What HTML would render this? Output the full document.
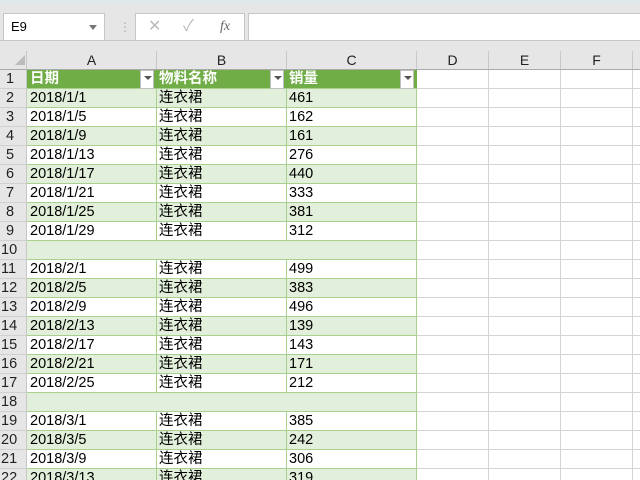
<!DOCTYPE html>
<html><head><meta charset="utf-8"><style>
*{margin:0;padding:0;box-sizing:border-box}
html,body{width:640px;height:480px;overflow:hidden}
body{background:#fff;font-family:"Liberation Sans","Noto Sans CJK SC",sans-serif;position:relative}
#top{position:absolute;left:0;top:0;width:640px;height:70px;background:#e6e6e6}
#top .strip{position:absolute;left:0;top:0;width:640px;height:3px;background:#dfe9ea}
.box{position:absolute;background:#fff;border:1px solid #c6c6c6}
.ch{position:absolute;top:51px;height:19px;font-size:14px;color:#222;text-align:center;line-height:19px;border-right:1px solid #c8c8c8}
.r{position:absolute;left:0;width:640px;height:19px;font-size:14.5px;line-height:19px;color:#000}
.r div{position:absolute;top:0;height:19px;white-space:nowrap}
.rh{left:0;width:27px;background:#e6e6e6;color:#222;padding-left:6px;border-right:1px solid #c8c8c8;border-bottom:1px solid #d0d0d0}
.g .band,.w .band{left:27px;width:390px}
.g .band{background:#e2efda;border-bottom:1px solid #a9d08e;border-right:1px solid #a9d08e}
.w .band{background:#fff;border-bottom:1px solid #a9d08e;border-right:1px solid #a9d08e}
.d .band{background-image:linear-gradient(to right,transparent 129px,#a9d08e 129px 130px,transparent 130px 259px,#a9d08e 259px 260px,transparent 260px)}
.a{left:30px}.b{left:159px}.c{left:289px}
.dd{position:absolute;top:2px;width:14px;height:14px;background:#fff;border:1px solid #c0c0c0}
.dd:after{content:"";position:absolute;left:3px;top:5px;border-left:4px solid transparent;border-right:4px solid transparent;border-top:4px solid #555}
</style></head><body>
<div id="top"><div class="strip"></div>
<div class="box" style="left:3px;top:13px;width:102px;height:28px;font-size:13px;line-height:26px;padding-left:7px">E9<span style="position:absolute;right:7px;top:11px;border-left:4px solid transparent;border-right:4px solid transparent;border-top:5px solid #777"></span></div>
<div style="position:absolute;left:119px;top:20px;color:#aaa;font-size:12px">⋮</div>
<div class="box" style="left:135px;top:13px;width:110px;height:28px;color:#bbb;font-size:16px;line-height:26px"><span style="position:absolute;left:12px">✕</span><span style="position:absolute;left:47px">✓</span><span style="position:absolute;left:84px;color:#666;font-family:'Liberation Serif',serif;font-style:italic;font-size:14px">fx</span></div>
<div class="box" style="left:248px;top:13px;width:400px;height:28px"></div>
<div style="position:absolute;left:0;top:40px;width:640px;height:1px;background:#c6c6c6"></div>
<div style="position:absolute;left:15px;top:55px;width:0;height:0;border-left:10px solid transparent;border-bottom:10px solid #bcbcbc"></div>
</div>
<div class="ch" style="left:0;width:27px"></div>
<div class="ch" style="left:27px;width:130px">A</div>
<div class="ch" style="left:157px;width:130px">B</div>
<div class="ch" style="left:287px;width:130px">C</div>
<div class="ch" style="left:417px;width:72px">D</div>
<div class="ch" style="left:489px;width:72px">E</div>
<div class="ch" style="left:561px;width:72px">F</div>
<div style="position:absolute;left:0;top:69px;width:640px;height:1px;background:#aaa"></div>

<div style="position:absolute;left:27px;top:70px;width:613px;height:410px;background:
repeating-linear-gradient(to bottom,transparent 0 18px,#d4d4d4 18px 19px),#fff"></div>
<div style="position:absolute;left:488px;top:70px;width:1px;height:410px;background:#d4d4d4"></div>
<div style="position:absolute;left:560px;top:70px;width:1px;height:410px;background:#d4d4d4"></div>
<div style="position:absolute;left:632px;top:70px;width:1px;height:410px;background:#d4d4d4"></div>

<div class="r" style="top:70px"><div class="rh">1</div><div style="left:27px;width:390px;background:#70ad47;border-bottom:1px solid #a9d08e"></div>
<div class="a" style="color:#fff;font-weight:bold">日期</div><div class="dd" style="left:140px"></div>
<div class="b" style="color:#fff;font-weight:bold">物料名称</div><div class="dd" style="left:270px"></div>
<div class="c" style="color:#fff;font-weight:bold">销量</div><div class="dd" style="left:400px"></div></div>

<div class="r g d" style="top:89px"><div class="rh">2</div><div class="band"></div><div class="a">2018/1/1</div><div class="b">连衣裙</div><div class="c">461</div></div>
<div class="r w d" style="top:108px"><div class="rh">3</div><div class="band"></div><div class="a">2018/1/5</div><div class="b">连衣裙</div><div class="c">162</div></div>
<div class="r g d" style="top:127px"><div class="rh">4</div><div class="band"></div><div class="a">2018/1/9</div><div class="b">连衣裙</div><div class="c">161</div></div>
<div class="r w d" style="top:146px"><div class="rh">5</div><div class="band"></div><div class="a">2018/1/13</div><div class="b">连衣裙</div><div class="c">276</div></div>
<div class="r g d" style="top:165px"><div class="rh">6</div><div class="band"></div><div class="a">2018/1/17</div><div class="b">连衣裙</div><div class="c">440</div></div>
<div class="r w d" style="top:184px"><div class="rh">7</div><div class="band"></div><div class="a">2018/1/21</div><div class="b">连衣裙</div><div class="c">333</div></div>
<div class="r g d" style="top:203px"><div class="rh">8</div><div class="band"></div><div class="a">2018/1/25</div><div class="b">连衣裙</div><div class="c">381</div></div>
<div class="r w d" style="top:222px"><div class="rh">9</div><div class="band"></div><div class="a">2018/1/29</div><div class="b">连衣裙</div><div class="c">312</div></div>
<div class="r g" style="top:241px"><div class="rh" style="padding-left:1px">10</div><div class="band"></div></div>
<div class="r w d" style="top:260px"><div class="rh" style="padding-left:1px">11</div><div class="band"></div><div class="a">2018/2/1</div><div class="b">连衣裙</div><div class="c">499</div></div>
<div class="r g d" style="top:279px"><div class="rh" style="padding-left:1px">12</div><div class="band"></div><div class="a">2018/2/5</div><div class="b">连衣裙</div><div class="c">383</div></div>
<div class="r w d" style="top:298px"><div class="rh" style="padding-left:1px">13</div><div class="band"></div><div class="a">2018/2/9</div><div class="b">连衣裙</div><div class="c">496</div></div>
<div class="r g d" style="top:317px"><div class="rh" style="padding-left:1px">14</div><div class="band"></div><div class="a">2018/2/13</div><div class="b">连衣裙</div><div class="c">139</div></div>
<div class="r w d" style="top:336px"><div class="rh" style="padding-left:1px">15</div><div class="band"></div><div class="a">2018/2/17</div><div class="b">连衣裙</div><div class="c">143</div></div>
<div class="r g d" style="top:355px"><div class="rh" style="padding-left:1px">16</div><div class="band"></div><div class="a">2018/2/21</div><div class="b">连衣裙</div><div class="c">171</div></div>
<div class="r w d" style="top:374px"><div class="rh" style="padding-left:1px">17</div><div class="band"></div><div class="a">2018/2/25</div><div class="b">连衣裙</div><div class="c">212</div></div>
<div class="r g" style="top:393px"><div class="rh" style="padding-left:1px">18</div><div class="band"></div></div>
<div class="r w d" style="top:412px"><div class="rh" style="padding-left:1px">19</div><div class="band"></div><div class="a">2018/3/1</div><div class="b">连衣裙</div><div class="c">385</div></div>
<div class="r g d" style="top:431px"><div class="rh" style="padding-left:1px">20</div><div class="band"></div><div class="a">2018/3/5</div><div class="b">连衣裙</div><div class="c">242</div></div>
<div class="r w d" style="top:450px"><div class="rh" style="padding-left:1px">21</div><div class="band"></div><div class="a">2018/3/9</div><div class="b">连衣裙</div><div class="c">306</div></div>
<div class="r g d" style="top:469px"><div class="rh" style="padding-left:1px">22</div><div class="band"></div><div class="a">2018/3/13</div><div class="b">连衣裙</div><div class="c">319</div></div>
</body></html>
